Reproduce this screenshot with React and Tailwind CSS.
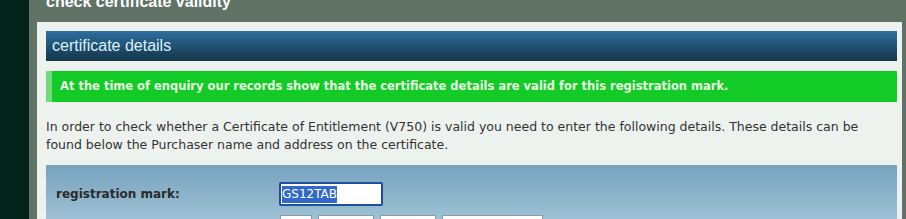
export default function App() {
  return (
    <div className="w-[906px] h-[219px] overflow-hidden flex bg-[#03231a]">
      <div className="w-[29px] shrink-0 bg-[#03231a]" />
      <div className="flex-1 flex flex-col bg-[#617366] pl-[8px] pr-[4px]">
        <div className="h-[22px] shrink-0 overflow-hidden pl-[9px]">
          <div className="-mt-[6px] leading-none text-[16px] font-bold text-white font-['Liberation_Sans',Arial,sans-serif]">
            check certificate validity
          </div>
        </div>
        <div className="flex-1 flex flex-col bg-[#eef2ef] pl-[9px] pr-[5px] pt-[9px]">
          <div className="h-[30px] shrink-0 flex items-center pl-[6px] bg-gradient-to-b from-[#2f6fa0] to-[#133548] text-[#dcf0fa] text-[16px] font-['Liberation_Sans',Arial,sans-serif]">
            certificate details
          </div>
          <div className="mt-[10px] h-[31px] shrink-0 flex items-center pl-[8px] bg-[#13cb26] border-l-[6px] border-[#72d97c] text-[#e8f8e2] text-[11.5px] font-bold font-['DejaVu_Sans',Verdana,sans-serif]">
            At the time of enquiry our records show that the certificate details are valid for this registration mark.
          </div>
          <p className="mt-[16px] text-[12.5px] leading-[18px] text-[#333] font-['DejaVu_Sans',Verdana,sans-serif]">
            In order to check whether a Certificate of Entitlement (V750) is valid you need to enter the following details. These details can be
            <br />
            found below the Purchaser name and address on the certificate.
          </p>
          <div className="mt-[11px] flex-1 bg-gradient-to-b from-[#77a2be] to-[#a9cadb] pl-[10px] pt-[17px]">
            <div className="flex items-center">
              <div className="w-[223px] text-[12px] font-bold text-[#2a2a2a] font-['DejaVu_Sans',Verdana,sans-serif]">
                registration mark:
              </div>
              <div className="w-[104px] h-[24px] bg-white border-2 border-[#1d4fa0] rounded-[2px] flex items-center pl-[1px]">
                <span className="bg-[#3269c9] text-white text-[12px] leading-[17px] font-['DejaVu_Sans',Verdana,sans-serif]">GS12TAB</span>
              </div>
            </div>
            <div className="flex mt-[9px] ml-[224px] gap-[6px]">
              <div className="w-[32px] h-[20px] bg-white border border-[#8a9aa6]" />
              <div className="w-[56px] h-[20px] bg-white border border-[#8a9aa6]" />
              <div className="w-[56px] h-[20px] bg-white border border-[#8a9aa6]" />
              <div className="w-[101px] h-[20px] bg-white border border-[#8a9aa6]" />
            </div>
          </div>
        </div>
      </div>
    </div>
  );
}
